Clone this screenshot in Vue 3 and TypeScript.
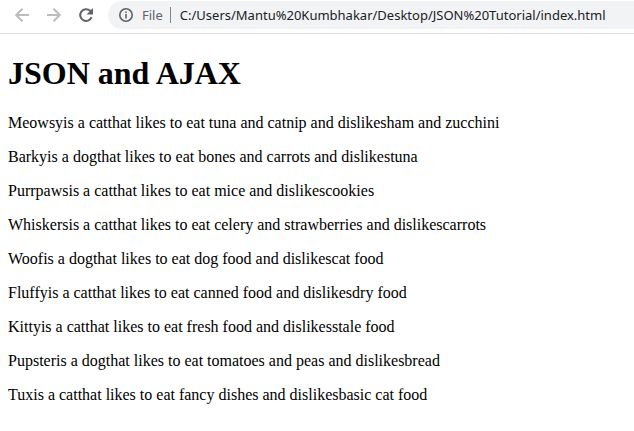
<script setup lang="ts">
interface Animal {
  name: string
  species: string
  likes: string[]
  dislikes: string[]
}

const address = 'C:/Users/Mantu%20Kumbhakar/Desktop/JSON%20Tutorial/index.html'

const animals: Animal[] = [
  { name: 'Meowsy', species: 'cat', likes: ['tuna', 'catnip'], dislikes: ['ham', 'zucchini'] },
  { name: 'Barky', species: 'dog', likes: ['bones', 'carrots'], dislikes: ['tuna'] },
  { name: 'Purrpaws', species: 'cat', likes: ['mice'], dislikes: ['cookies'] },
  { name: 'Whiskers', species: 'cat', likes: ['celery', 'strawberries'], dislikes: ['carrots'] },
  { name: 'Woof', species: 'dog', likes: ['dog food'], dislikes: ['cat food'] },
  { name: 'Fluffy', species: 'cat', likes: ['canned food'], dislikes: ['dry food'] },
  { name: 'Kitty', species: 'cat', likes: ['fresh food'], dislikes: ['stale food'] },
  { name: 'Pupster', species: 'dog', likes: ['tomatoes', 'peas'], dislikes: ['bread'] },
  { name: 'Tux', species: 'cat', likes: ['fancy dishes'], dislikes: ['basic cat food'] },
]

function describe(a: Animal): string {
  return `${a.name}is a ${a.species}that likes to eat ${a.likes.join(' and ')} and dislikes${a.dislikes.join(' and ')}`
}
</script>

<template>
  <header class="toolbar">
    <button class="nav" type="button" aria-label="Back" disabled>
      <svg viewBox="0 0 16 16" width="16" height="16"><path d="M15 8H2.5M8.5 1.7L2.2 8l6.3 6.3" /></svg>
    </button>
    <button class="nav" type="button" aria-label="Forward" disabled>
      <svg viewBox="0 0 16 16" width="16" height="16"><path d="M1 8h12.5M7.5 1.7L13.8 8l-6.3 6.3" /></svg>
    </button>
    <button class="nav active" type="button" aria-label="Reload">
      <svg viewBox="0 0 16 16" width="16" height="16">
        <path d="M13.6 10.2A5.9 5.9 0 1 1 12.2 3.8L13.5 5.2" />
        <path class="solid" d="M15 1v6.4H8.6z" />
      </svg>
    </button>
    <div class="omnibox">
      <svg class="info" viewBox="0 0 14 14" width="14" height="14">
        <circle cx="7" cy="7" r="6.2" />
        <path d="M7 6v4.4M7 3.4V5" />
      </svg>
      <span class="scheme">File</span>
      <input class="address" type="text" aria-label="Address" :value="address" />
    </div>
  </header>
  <main class="page">
    <h1>JSON and AJAX</h1>
    <p v-for="animal in animals" :key="animal.name">{{ describe(animal) }}</p>
  </main>
</template>

<style>
body {
  margin: 0;
  background: #fff;
}
</style>

<style scoped>
.toolbar {
  display: flex;
  align-items: center;
  padding: 1px 0 4px 14px;
  border-bottom: 1px solid #dadce0;
}
.nav {
  display: flex;
  margin: 0 16px 0 0;
  padding: 0;
  border: 0;
  background: none;
  color: #babcbe;
}
.nav.active {
  margin-right: 14px;
  color: #5f6368;
}
svg {
  display: block;
  flex: none;
  fill: none;
  stroke: currentColor;
  stroke-width: 2;
}
.solid {
  fill: currentColor;
  stroke: none;
}
.omnibox {
  display: flex;
  flex: 1;
  align-items: center;
  height: 28px;
  padding-left: 11px;
  border-radius: 14px 0 0 14px;
  background: #f1f3f4;
  font: 13px/16px "Noto Sans", "Open Sans", sans-serif;
}
.info {
  color: #5f6368;
  stroke-width: 1.6;
}
.scheme {
  margin-left: 9px;
  padding-right: 7px;
  border-right: 1px solid #80868b;
  color: #5f6368;
}
.address {
  flex: 1;
  min-width: 0;
  padding: 0 0 0 9px;
  border: 0;
  outline: 0;
  background: none;
  color: #202124;
  font: inherit;
}
.page {
  padding: 21px 8px;
  color: #000;
  font: 16px/18px "Liberation Serif", serif;
}
h1 {
  margin: 0 0 22px;
  font-size: 32px;
  line-height: 37px;
}
p {
  margin: 0 0 16px;
}
</style>
